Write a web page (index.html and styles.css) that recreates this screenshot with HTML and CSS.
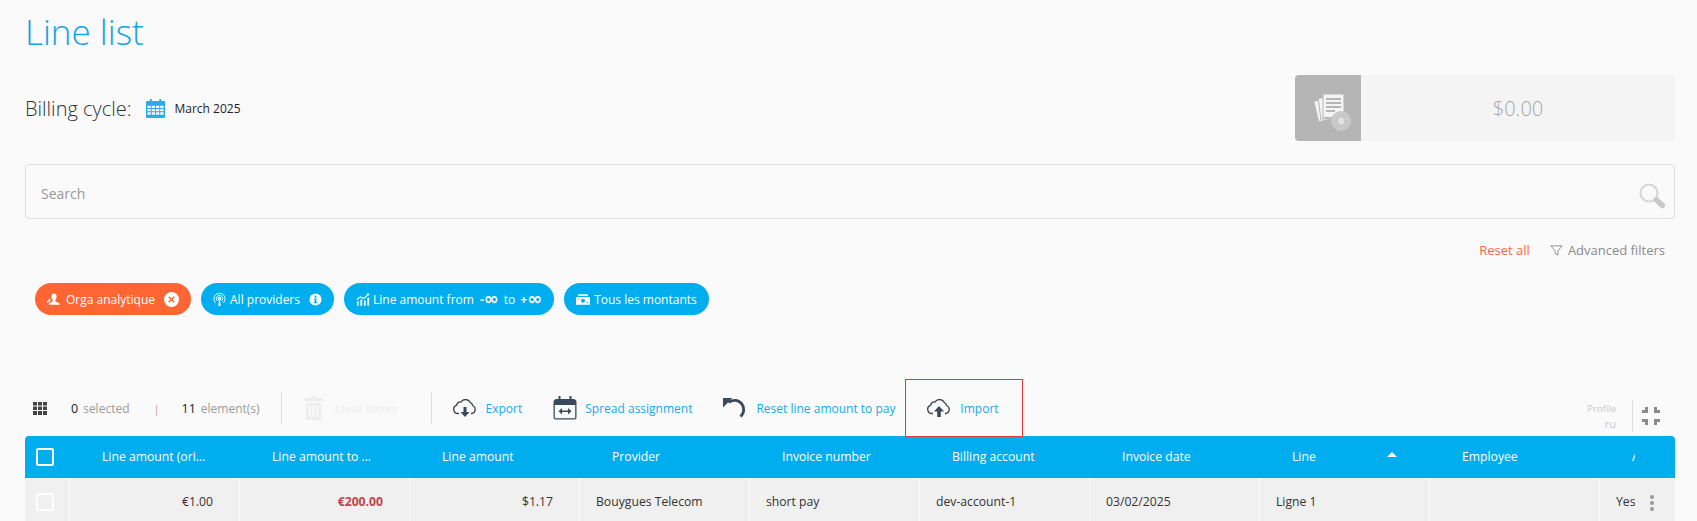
FILE: index.html
```html
<!DOCTYPE html>
<html lang="en">
<head>
<meta charset="utf-8">
<title>Line list</title>
<link rel="stylesheet" href="styles.css">
</head>
<body>
<main class="page">
  <h1 class="title">Line list</h1>
  <section class="billing">
    <div class="cycle">
      <span class="cycle-label">Billing cycle:</span>
      <svg class="cal" viewBox="0 0 20 20"><path fill="#29a9ee" d="M4 0h2v2h8V0h2v2h3a1 1 0 0 1 1 1v16a1 1 0 0 1-1 1H1a1 1 0 0 1-1-1V3a1 1 0 0 1 1-1h3z"/><path fill="#fafafa" d="M1.500 7h3.500v2.500h-3.500zM6 7h3.500v2.500H6zM10.500 7H14v2.500h-3.500zM15 7h3.500v2.500H15zM1.500 10.500h3.500V13h-3.500zM6 10.500h3.500V13H6zM10.500 10.500H14V13h-3.500zM15 10.500h3.500V13H15zM1.500 14h3.500v2.500h-3.500zM6 14h3.500v2.500H6zM10.500 14H14v2.500h-3.500zM15 14h3.500v2.500H15z"/></svg>
      <span class="cycle-value">March 2025</span>
    </div>
    <div class="summary">
      <div class="summary-icon">
        <svg class="docs" viewBox="0 0 31 29"><g fill="#f4f4f4" stroke="#b5b5b5"><rect x="3" y="5.500" width="14" height="21" transform="rotate(-14 10 16)"/><rect x="6.500" y="3.500" width="14" height="21" transform="rotate(-7 13 14)"/><rect x="10" y="0" width="21" height="23.500"/></g><path fill="#b5b5b5" d="M13 4h15v2H13zM13 8h15v2H13zM13 12h15v2H13zM13 16h9v2h-9z"/></svg>
        <span class="summary-badge">0</span>
      </div>
      <div class="summary-amount">$0.00</div>
    </div>
  </section>
  <div class="search">
    <span class="search-text">Search</span>
    <svg class="search-icon" viewBox="0 0 26 26"><circle cx="10" cy="10" r="8.500" fill="none" stroke="#d6d6d6" stroke-width="2.200"/><path d="M17.500 17l6 5.500" stroke="#c8c8c8" stroke-width="5.500" stroke-linecap="round"/></svg>
  </div>
  <div class="filter-links">
    <a class="reset-all">Reset all</a>
    <a class="advanced"><svg class="funnel" viewBox="0 0 14 14"><path d="M1 2h12L8.500 7.500V12l-3-1.500v-3z" fill="none" stroke="#8a8a8a"/></svg>Advanced filters</a>
  </div>
  <div class="pills">
    <span class="pill pill-orange"><svg class="pill-icon" viewBox="0 0 16 14"><path fill="#fff" d="M8 0c2 0 3 1.500 3 3.500S10 7 9.500 7.500V9l5 2.500V13H2v-1.500L6.500 9V7.500C6 7 5 5.500 5 3.500S6 0 8 0z"/><path fill="#fff" d="M0 11l3.500-2 .500-1.500C3.500 7 3 5.500 3 4L2 7.500 0 9z"/></svg>Orga analytique<svg class="pill-end" viewBox="0 0 16 16"><circle cx="8" cy="8" r="8" fill="#fff"/><path d="M5 5l6 6M11 5l-6 6" stroke="#ff6633" stroke-width="1.500"/></svg></span>
    <span class="pill pill-providers"><svg class="pill-icon" viewBox="0 0 14 14"><g fill="none" stroke="#fff"><circle cx="7" cy="6" r="1.500" fill="#fff"/><path d="M4.500 8.500a3.500 3.500 0 1 1 5 0M2.800 10.500a6 6 0 1 1 8.400 0"/></g><path fill="#fff" d="M6.300 7h1.400l.5 7H5.800z"/></svg>All providers<svg class="pill-info" viewBox="0 0 14 14"><circle cx="7" cy="7" r="6.500" fill="#fff"/><path fill="#00aeef" d="M6 3h2v2H6zM5.500 6H8v4h1v1H5v-1h1V7h-.5z"/></svg></span>
    <span class="pill pill-amount"><svg class="pill-icon" viewBox="0 0 16 14"><path fill="#fff" d="M1 9h2v5H1zM5 7h2v7H5zM9 8h2v6H9zM13 5h2v9h-2z"/><path d="M1 7l4-3 4 2 5-5" fill="none" stroke="#fff" stroke-width="1.300"/><path fill="#fff" d="M12 0h3v3z"/></svg>Line amount from<b class="inf">-<span class="inf-glyph">∞</span></b><span class="to">to</span><b class="inf">+<span class="inf-glyph">∞</span></b></span>
    <span class="pill"><svg class="pill-icon" viewBox="0 0 16 14"><path fill="#fff" d="M3 1h10l1 2H2zM0 4h16v9H0z"/><circle cx="8" cy="8.500" r="2.300" fill="#00aeef"/><path fill="#00aeef" d="M2 6h2v1H2zM12 10h2v1h-2z"/></svg>Tous les montants</span>
  </div>
  <div class="toolbar">
    <svg class="grid-icon" viewBox="0 0 14 13"><path fill="#444" d="M0 0h4v3.500H0zM5 0h4v3.500H5zM10 0h4v3.500h-4zM0 4.500h4V8H0zM5 4.500h4V8H5zM10 4.500h4V8h-4zM0 9h4v4H0zM5 9h4v4H5zM10 9h4v4h-4z"/></svg>
    <span class="count">0</span><span class="count-label">selected</span>
    <span class="sep">|</span>
    <span class="count">11</span><span class="count-label">element(s)</span>
    <span class="divider"></span>
    <button class="tool tool-clear"><svg class="trash" viewBox="0 0 20 25"><path fill="#eeeeee" d="M7 0h6v2h7v3H0V2h7zM2 7h16v18H2z"/><path fill="#fafafa" d="M5 10h2v12H5zM9 10h2v12H9zM13 10h2v12h-2z"/></svg>Clear filters</button>
    <span class="divider divider-b"></span>
    <button class="tool tool-export"><svg class="cloud" viewBox="0 0 24 18"><path d="M6 14.500H5A4.300 4.300 0 0 1 3.700 6.100 3.600 3.600 0 0 1 8 3 5.300 5.300 0 0 1 17.300 3.600 3.300 3.300 0 0 1 19.500 6.500 4.200 4.200 0 0 1 19 14.500h-1" fill="none" stroke="#3b4350" stroke-width="1.300"/><path fill="#3b4a5a" d="M10.500 8h3v5H16.500l-4.500 5-4.500-5h3z"/></svg>Export</button>
    <button class="tool tool-spread"><svg class="spread" viewBox="0 0 24 24"><path fill="#3b4a5a" d="M4 3h1.500V0h2v3h9V0h2v3H20a3 3 0 0 1 3.500 3v15.500a2 2 0 0 1-2 2h-19a2 2 0 0 1-2-2V6A3 3 0 0 1 4 3zM1.800 9v12.700c0 .3.300.6.600.6h19.200c.3 0 .6-.3.600-.6V9z"/><path fill="#3b4a5a" d="M8.500 14.500h7v1.500h-7z"/><path fill="#3b4a5a" d="M9 12v6.500L5.500 15.200zM15 12v6.500l3.500-3.300z"/></svg>Spread assignment</button>
    <button class="tool tool-reset"><svg class="undo" viewBox="0 0 24 22"><path d="M5.500 5.500A9.200 9.200 0 0 1 17.500 19.500" fill="none" stroke="#3b4a5a" stroke-width="2.800"/><path fill="#3b4a5a" d="M0 1h9.500L0 10.500z"/></svg>Reset line amount to pay</button>
    <button class="tool tool-import"><svg class="cloud" viewBox="0 0 24 18"><path d="M6 14.500H5A4.300 4.300 0 0 1 3.700 6.100 3.600 3.600 0 0 1 8 3 5.300 5.300 0 0 1 17.300 3.600 3.300 3.300 0 0 1 19.500 6.500 4.200 4.200 0 0 1 19 14.500h-1" fill="none" stroke="#3b4350" stroke-width="1.300"/><path fill="#3b4a5a" d="M12 7l5 5.500h-3.200V18h-3.600v-5.500H7z"/></svg>Import</button>
    <div class="profile"><span>Profile</span><span class="profile-name">ru</span></div>
    <svg class="collapse" viewBox="0 0 18 18"><path fill="#8b8b8b" d="M3 0h3v6H0V3h3zM12 0h3v3h3v3h-6zM0 12h6v6H3v-3H0zM12 12h6v3h-3v3h-3z"/></svg>
  </div>
  <div class="table">
    <div class="head cell-check"><span class="check"></span></div>
    <div class="head">Line amount (original)</div>
    <div class="head">Line amount to pay</div>
    <div class="head">Line amount</div>
    <div class="head">Provider</div>
    <div class="head">Invoice number</div>
    <div class="head">Billing account</div>
    <div class="head">Invoice date</div>
    <div class="head head-sorted">Line<span class="sort-arrow"></span></div>
    <div class="head">Employee</div>
    <div class="head head-clipped">Active</div>
    <div class="head"></div>
    <div class="cell cell-check"><span class="check"></span></div>
    <div class="cell num">€1.00</div>
    <div class="cell num neg">€200.00</div>
    <div class="cell num">$1.17</div>
    <div class="cell">Bouygues Telecom</div>
    <div class="cell">short pay</div>
    <div class="cell">dev-account-1</div>
    <div class="cell">03/02/2025</div>
    <div class="cell">Ligne 1</div>
    <div class="cell"></div>
    <div class="cell cell-yes">Yes</div>
    <div class="cell cell-more"><span class="kebab"><i></i><i></i><i></i></span></div>
  </div>
</main>
</body>
</html>
```
FILE: styles.css
```css
html, body { margin: 0; height: 521px; overflow: hidden; background: #fafafa; }
body { font-family: "Open Sans", "Liberation Sans", sans-serif; font-size: 12px; color: #333; }
.page { padding: 0 22px 0 25px; display: flex; flex-direction: column; }
.title { margin: 0; height: 75px; font-size: 35px; line-height: 64px; font-weight: 300; color: #0fa5e6; }
.billing { display: flex; justify-content: space-between; align-items: center; height: 66px; }
.cycle { display: flex; align-items: center; }
.cycle-label { font-size: 20px; font-weight: 300; color: #333; }
.cal { width: 19px; height: 19px; margin: 0 9px 0 15px; }
.cycle-value { font-size: 12px; color: #222; }
.summary { display: flex; width: 380px; height: 66px; border-radius: 4px; overflow: hidden; background: #f4f4f4; }
.summary-icon { position: relative; width: 66px; background: #b5b5b5; display: flex; align-items: flex-start; }
.docs { width: 31px; height: 29px; margin: 19px 0 0 18px; }
.summary-badge { position: absolute; left: 36px; top: 36px; width: 20px; height: 20px; border-radius: 50%; background: #c9c9c9; color: #f4f4f4; font-size: 9px; font-weight: 700; line-height: 20px; text-align: center; }
.summary-amount { flex: 1; text-align: center; font-size: 20px; font-weight: 300; color: #a8a8a8; line-height: 68px; }
.search { display: flex; align-items: center; justify-content: space-between; height: 53px; margin-top: 23px; padding: 0 9px 0 15px; border: 1px solid #dedede; border-radius: 4px; }
.search-text { font-size: 14px; color: #999; padding-top: 4px; }
.search-icon { width: 26px; height: 26px; margin-top: 8px; }
.filter-links { display: flex; justify-content: flex-end; align-items: center; height: 24px; margin-top: 19px; padding-right: 10px; }
.reset-all { color: #ff6633; font-size: 13px; margin-right: 20px; }
.advanced { display: flex; align-items: center; color: #8a8a8a; font-size: 13px; }
.funnel { width: 13px; height: 13px; margin-right: 5px; }
.pills { display: flex; gap: 10px; height: 32px; margin-top: 21px; padding-left: 10px; }
.pill { display: flex; align-items: center; height: 32px; padding: 0 12px; border-radius: 16px; background: #00aeef; color: #fff; font-size: 12px; white-space: nowrap; }
.pill-orange { background: #ff6633; }
.pill-orange .pill-icon { margin-right: 5px; }
.pill-icon { width: 14px; height: 13px; margin-right: 4px; }
.pill-providers .pill-icon { width: 13px; }
.pill-amount .pill-icon { margin-right: 3px; }
.pill-end { width: 15px; height: 15px; margin-left: 9px; }
.pill-info { width: 13px; height: 13px; margin-left: 9px; }
.inf { display: flex; align-items: center; margin-left: 6px; font-size: 12px; font-weight: 700; }
.inf-glyph { font-family: "DejaVu Sans", sans-serif; font-size: 18px; line-height: 1; font-weight: 700; }
.to { margin: 0 -1px 0 5px; }
.toolbar { display: flex; align-items: center; height: 56px; margin-top: 65px; padding-left: 8px; }
.grid-icon { width: 14px; height: 13px; margin-right: 24px; }
.count { font-size: 12.500px; color: #222; margin-right: 5px; }
.count-label { font-size: 12px; color: #9a9a9a; }
.sep { color: #c99; margin: 0 22px 0 24px; font-size: 11px; }
.divider { width: 1px; height: 30px; background: #dcdcdc; margin-left: 21px; }
.divider-b { margin-left: 33px; }
.tool { display: flex; align-items: center; border: 0; padding: 0; background: none; font-family: inherit; font-size: 12px; color: #1aa7ec; white-space: nowrap; }
.tool-clear { margin-left: 22px; color: #efefef; font-size: 11.300px; font-weight: 600; }
.trash { width: 19px; height: 24px; margin-right: 12px; }
.tool-export { margin-left: 21px; }
.cloud { width: 24px; height: 18px; margin-right: 9px; }
.tool-spread { margin-left: 31px; }
.spread { width: 24px; height: 24px; margin-right: 8px; }
.tool-reset { margin-left: 31px; }
.undo { width: 24px; height: 22px; margin-right: 9px; }
.tool-import { position: relative; z-index: 1; margin-left: 10px; height: 58px; width: 118px; justify-content: center; border: 1px solid #e5383b; box-sizing: border-box; padding-right: 3px; }
.profile { margin-left: auto; margin-top: 16px; display: flex; flex-direction: column; align-items: flex-end; padding-right: 16px; border-right: 1px solid #dcdcdc; height: 30px; font-size: 9.500px; line-height: 15px; color: #c8c8c8; }
.profile-name { font-size: 11px; }
.collapse { width: 18px; height: 18px; margin: 16px 15px 0 9px; }
.table { display: grid; grid-template-columns: 44px repeat(9, 170px) 36px 40px; grid-template-rows: 42px 46px; border-radius: 4px 4px 0 0; overflow: hidden; }
.head { background: #00aeef; color: #fff; font-size: 12.200px; line-height: 42px; padding: 0 33px; white-space: nowrap; overflow: hidden; text-overflow: ellipsis; box-sizing: border-box; }
.head-sorted { position: relative; overflow: visible; }
.sort-arrow { position: absolute; left: 128px; top: 16px; border: 5px solid transparent; border-top: 0; border-bottom-color: #fff; }
.head-clipped { padding: 0 0 0 33px; text-overflow: clip; }
.cell-check { padding: 0 0 0 11px; display: flex; align-items: center; }
.check { display: block; box-sizing: border-box; width: 18px; height: 18px; border: 2px solid #fff; border-radius: 2px; }
.cell { background: #f0f0f0; border-left: 1px solid #fafafa; box-sizing: border-box; padding: 0 16px; font-size: 12.200px; line-height: 47px; color: #333; white-space: nowrap; overflow: hidden; }
.cell-check.cell { border-left: 0; padding: 2px 0 0 11px; }
.num { text-align: right; padding-right: 26px; }
.neg { color: #c0454a; font-weight: 700; }
.cell-yes { padding: 0 0 0 16px; overflow: visible; }
.cell-more { border-left: 0; padding: 0 6px 0 0; display: flex; justify-content: center; }
.kebab { display: flex; flex-direction: column; gap: 2px; padding-top: 17px; }
.kebab i { display: block; width: 4px; height: 4px; border-radius: 50%; background: #999; }
```
